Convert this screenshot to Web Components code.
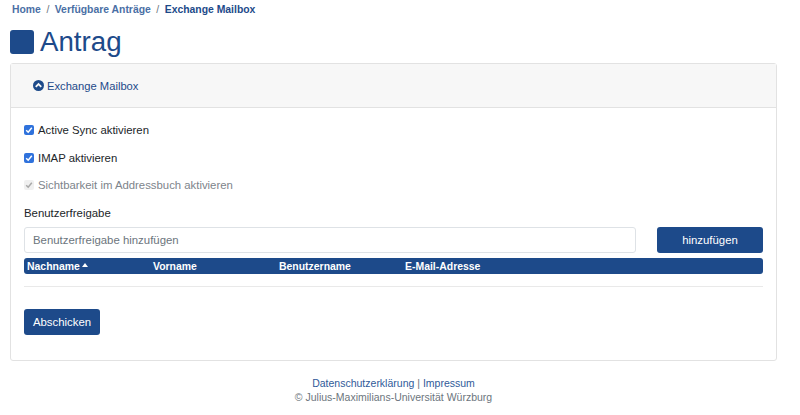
<!DOCTYPE html>
<html lang="de">
<head>
<meta charset="utf-8">
<title>Antrag</title>
<style>
  html, body { margin: 0; padding: 0; background: #fff; }
  body { font-family: "Liberation Sans", Arial, sans-serif; font-size: 11.35px; color: #212529; }
</style>
</head>
<body>
<app-page>
  <bread-crumbs slot="crumbs"></bread-crumbs>
  <page-title slot="title">Antrag</page-title>
  <request-card slot="card">
    <check-row checked>Active Sync aktivieren</check-row>
    <check-row checked>IMAP aktivieren</check-row>
    <check-row checked disabled>Sichtbarkeit im Addressbuch aktivieren</check-row>
    <share-form></share-form>
  </request-card>
  <page-footer slot="footer"></page-footer>
</app-page>

<script>
class AppPage extends HTMLElement {
  constructor() {
    super();
    this.attachShadow({ mode: 'open' });
    this.shadowRoot.innerHTML = `
      <style>
        :host { display: block; width: 800px; height: 415px; overflow: hidden; box-sizing: border-box; padding: 0 23px 0 10px; }
      </style>
      <slot name="crumbs"></slot>
      <slot name="title"></slot>
      <slot name="card"></slot>
      <slot name="footer"></slot>
    `;
  }
}

class BreadCrumbs extends HTMLElement {
  constructor() {
    super();
    this.attachShadow({ mode: 'open' });
    this.shadowRoot.innerHTML = `
      <style>
        :host { display: flex; gap: 5.5px; height: 20px; padding: 3px 0 0 2px; box-sizing: border-box; font-size: 10.4px; font-weight: 700; line-height: 14px; color: #1d4a8a; }
        a { color: #4a6fa5; text-decoration: none; }
        span { color: #6c757d; font-weight: 400; }
      </style>
      <a>Home</a><span>/</span><a>Verfügbare Anträge</a><span>/</span><b>Exchange Mailbox</b>
    `;
  }
}

class PageTitle extends HTMLElement {
  constructor() {
    super();
    this.attachShadow({ mode: 'open' });
    this.shadowRoot.innerHTML = `
      <style>
        :host { display: flex; align-items: center; gap: 6px; height: 43px; padding-top: 1px; box-sizing: border-box; font-size: 27.7px; font-weight: 400; color: #1d4a8a; }
        i { width: 24px; height: 24px; border-radius: 3px; background: #1d4a8a; }
      </style>
      <i></i><span><slot></slot></span>
    `;
  }
}

class RequestCard extends HTMLElement {
  constructor() {
    super();
    this.attachShadow({ mode: 'open' });
    this.shadowRoot.innerHTML = `
      <style>
        :host { display: block; height: 298px; box-sizing: border-box; border: 1px solid #e2e2e2; border-radius: 3px; }
        header { display: flex; align-items: center; gap: 3px; height: 44px; box-sizing: border-box; padding-left: 22px; background: #f7f7f7; border-bottom: 1px solid #e2e2e2; color: #1d4a8a; font-size: 11.2px; }
        svg { width: 11px; height: 11px; display: block; }
        main { padding: 8px 13px 0; }
      </style>
      <header>
        <svg viewBox="0 0 12 12"><circle cx="6" cy="6" r="6" fill="#1d4a8a"/><path d="M3 7.4 6 4.4l3 3" fill="none" stroke="#f7f7f7" stroke-width="2"/></svg>
        <span>Exchange Mailbox</span>
      </header>
      <main><slot></slot></main>
    `;
  }
}

class CheckRow extends HTMLElement {
  constructor() {
    super();
    this.attachShadow({ mode: 'open' });
    const off = this.hasAttribute('disabled');
    this.shadowRoot.innerHTML = `
      <style>
        :host { display: flex; align-items: center; gap: 4px; height: 27.75px; font-size: 11.35px; color: ${off ? '#7d848b' : '#212529'}; }
        i { width: 10px; height: 10px; border-radius: 2px; display: block; background: ${off ? '#f0f0f0' : '#2f72dc'}; }
        svg { display: block; width: 10px; height: 10px; }
      </style>
      <i><svg viewBox="0 0 10 10"><path d="M2.2 5.2 4.2 7.2 7.8 2.8" fill="none" stroke="${off ? '#a8a8a8' : '#fff'}" stroke-width="1.5"/></svg></i>
      <slot></slot>
    `;
  }
}

class ShareForm extends HTMLElement {
  constructor() {
    super();
    this.attachShadow({ mode: 'open' });
    this.shadowRoot.innerHTML = `
      <style>
        :host { display: block; font-size: 11.4px; }
        label { display: block; height: 20px; margin-top: 3.75px; line-height: 20px; color: #212529; }
        .add { display: flex; gap: 21px; height: 26px; margin-top: 4px; }
        input { flex: 1; min-width: 0; box-sizing: border-box; height: 26px; border: 1px solid #dee2e6; border-radius: 3px; padding: 0 8px; font: inherit; background: #fff; }
        input::placeholder { color: #6c757d; opacity: 1; }
        button { box-sizing: border-box; height: 26px; border: 0; border-radius: 3px; background: #1d4a8a; color: #fff; font: inherit; }
        .add button { width: 106px; }
        .head { display: grid; grid-template-columns: 126px 126px 126px 1fr; height: 16px; margin-top: 5px; padding: 1px 0 0 3px; box-sizing: border-box; align-items: center; border-radius: 3px; background: #1d4a8a; color: #fff; font-size: 10.45px; font-weight: 700; }
        .head svg { width: 6px; height: 4px; margin: 0 0 3px -1px; }
        hr { height: 1px; border: 0; background: #e9e9e9; margin: 12px 0 22px; }
        .send { width: 76px; display: block; }
      </style>
      <label>Benutzerfreigabe</label>
      <div class="add">
        <input placeholder="Benutzerfreigabe hinzufügen">
        <button>hinzufügen</button>
      </div>
      <div class="head">
        <span>Nachname <svg viewBox="0 0 6 4"><path d="M0 4 3 0l3 4z" fill="#fff"/></svg></span>
        <span>Vorname</span><span>Benutzername</span><span>E-Mail-Adresse</span>
      </div>
      <hr>
      <button class="send">Abschicken</button>
    `;
  }
}

class PageFooter extends HTMLElement {
  constructor() {
    super();
    this.attachShadow({ mode: 'open' });
    this.shadowRoot.innerHTML = `
      <style>
        :host { display: block; padding-top: 15px; text-align: center; font-size: 10.5px; line-height: 14px; color: #6c757d; }
        div:first-child { font-size: 10.3px; }
        a { color: #2f5a99; text-decoration: none; }
      </style>
      <div><a>Datenschutzerklärung</a> | <a>Impressum</a></div>
      <div>© Julius-Maximilians-Universität Würzburg</div>
    `;
  }
}

customElements.define('app-page', AppPage);
customElements.define('bread-crumbs', BreadCrumbs);
customElements.define('page-title', PageTitle);
customElements.define('request-card', RequestCard);
customElements.define('check-row', CheckRow);
customElements.define('share-form', ShareForm);
customElements.define('page-footer', PageFooter);
</script>
</body>
</html>
